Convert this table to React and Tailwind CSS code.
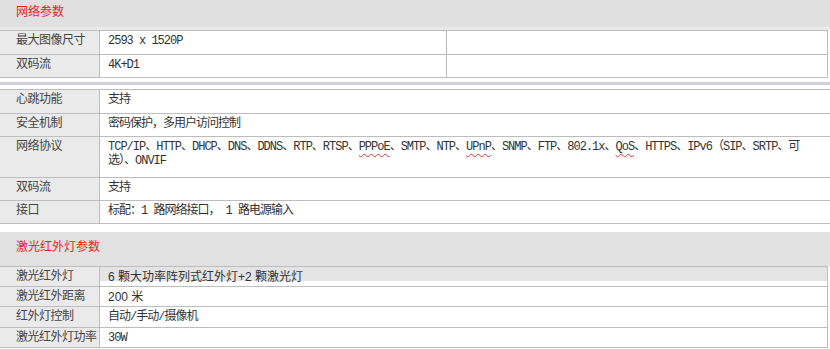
const LABEL =
  'w-[100px] shrink-0 whitespace-nowrap bg-[#eaeaea] border-r border-[#bdbdbd] pl-4 pt-[3px] tracking-[-0.5px] text-[#444]';
const VALUE = 'pl-2 pt-[3px] tracking-[-1px]';

const sn = 'underline decoration-wavy decoration-[#d33] decoration-1 underline-offset-[3px]';

const sans = { fontFamily: '"Liberation Sans", "Noto Sans CJK SC", sans-serif' };

function SectionTitle({ children, tall }) {
  return (
    <div
      className={
        tall
          ? 'h-[34px] bg-[#e1e1e1] pl-4 pt-[9px] text-[#ee1c1c]'
          : 'h-[27px] bg-[#e0e0e0] pl-4 pt-[6px] text-[#ee1c1c]'
      }
    >
      {children}
    </div>
  );
}

function Row({ label, h, children }) {
  return (
    <div className={`flex border-b border-[#bdbdbd] ${h}`}>
      <div className={LABEL}>{label}</div>
      <div className={`flex-1 ${VALUE}`}>{children}</div>
    </div>
  );
}

export default function App() {
  return (
    <div
      className="w-[830px] h-[349px] overflow-hidden bg-white text-[12px] leading-[14px] text-[#333]"
      style={{ fontFamily: '"Liberation Mono", "Noto Sans CJK SC", monospace' }}
    >
      <SectionTitle>网络参数</SectionTitle>
      <div className="h-[3px] bg-[#e9e9e9]" />

      {/* 网络参数 */}
      <div className="w-[828px] border-t border-r border-[#bdbdbd]">
        <div className="flex h-[24px] border-b border-[#bdbdbd]">
          <div className={LABEL}>最大图像尺寸</div>
          <div className={`w-[347px] border-r border-[#bdbdbd] ${VALUE}`}>2593 x 1520P</div>
          <div className="flex-1" />
        </div>
        <div className="flex h-[23px] border-b border-[#bdbdbd]">
          <div className={LABEL}>双码流</div>
          <div className={`w-[347px] border-r border-[#bdbdbd] ${VALUE}`}>4K+D1</div>
          <div className="flex-1" />
        </div>
      </div>

      <div className="h-[4px]" />
      <div className="h-[3px] bg-[#cfd0d6]" />
      <div className="h-[4px]" />

      <div className="border-t border-[#bdbdbd]">
        <Row label="心跳功能" h="h-[24px]">支持</Row>
        <Row label="安全机制" h="h-[23px]">密码保护，多用户访问控制</Row>
        <Row label="网络协议" h="h-[41px]">
          <span className="whitespace-nowrap">
            TCP/IP、HTTP、DHCP、DNS、DDNS、RTP、RTSP、<span className={sn}>PPPoE</span>、SMTP、NTP、
            <span className={sn}>UPnP</span>、SNMP、FTP、802.1x、<span className={sn}>QoS</span>、HTTPS、IPv6（SIP、SRTP、可
          </span>
          <br />
          选）、ONVIF
        </Row>
        <Row label="双码流" h="h-[23px]">支持</Row>
        <Row label="接口" h="h-[23px]">标配：1 路网络接口， 1 路电源输入</Row>
      </div>

      <div className="h-[8px]" />
      <SectionTitle tall>激光红外灯参数</SectionTitle>

      {/* 激光红外灯参数 */}
      <div className="w-[828px] border-t border-r border-[#bdbdbd]">
        <div className="flex h-[20px] border-b border-[#bdbdbd]">
          <div className={LABEL}>激光红外灯</div>
          <div className="flex-1">
            <div className="h-[14px] bg-[#e4e4e4] pl-2 pt-[3px] leading-[14px]" style={sans}>
              6 颗大功率阵列式红外灯+2 颗激光灯
            </div>
          </div>
        </div>
        <div className="flex h-[20px] border-b border-[#bdbdbd]">
          <div className={LABEL}>激光红外距离</div>
          <div className="flex-1 pl-2 pt-[3px]" style={sans}>
            200 米
          </div>
        </div>
        <Row label="红外灯控制" h="h-[21px]">自动/手动/摄像机</Row>
        <Row label="激光红外灯功率" h="h-[20px]">30W</Row>
      </div>
    </div>
  );
}
